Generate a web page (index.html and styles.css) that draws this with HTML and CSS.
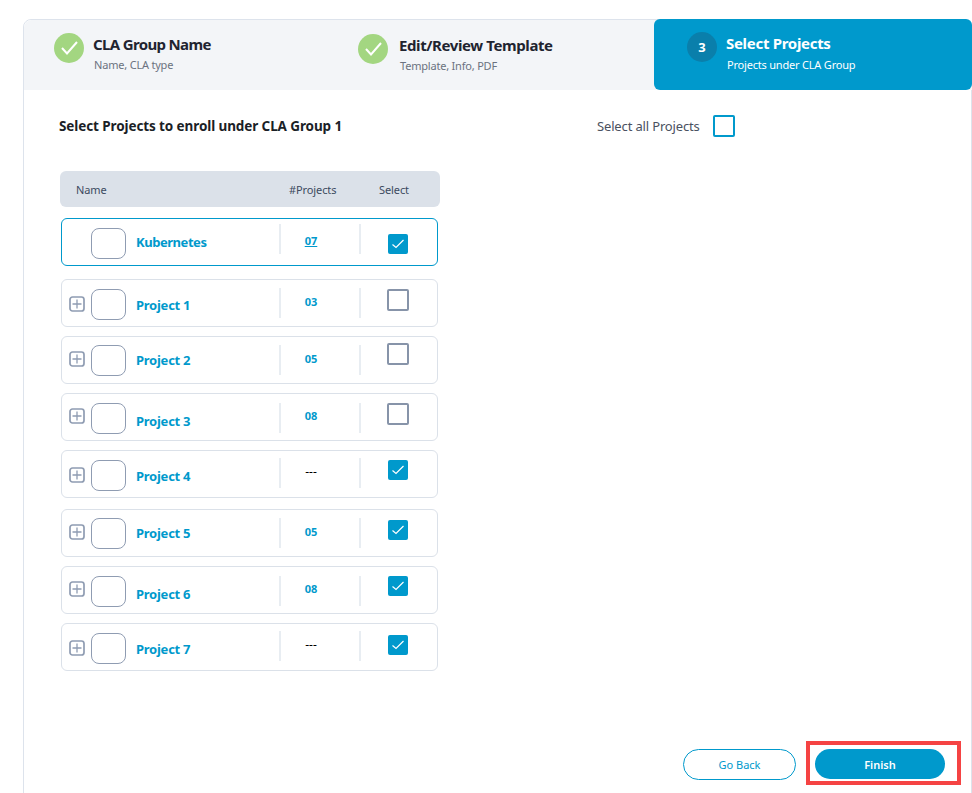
FILE: index.html
```html
<!DOCTYPE html>
<html lang="en">
<head>
    <meta charset="UTF-8">
    <meta name="viewport" content="width=device-width, initial-scale=1.0">
    <title>Select Projects</title>
    <link rel="stylesheet" href="styles.css">
</head>
<body>

    <div class="card">

        <!-- Stepper -->
        <div class="stepper">
            <div class="step step-one">
                <span class="step-icon done">
                    <svg width="30" height="30" viewBox="0 0 30 30"><path d="M8 15l5 5.5L23 9" fill="none" stroke="#fff" stroke-width="2"/></svg>
                </span>
                <div class="step-text">
                    <div class="step-title">CLA Group Name</div>
                    <div class="step-sub">Name, CLA type</div>
                </div>
            </div>
            <div class="step step-two">
                <span class="step-icon done">
                    <svg width="30" height="30" viewBox="0 0 30 30"><path d="M8 15l5 5.5L23 9" fill="none" stroke="#fff" stroke-width="2"/></svg>
                </span>
                <div class="step-text">
                    <div class="step-title">Edit/Review Template</div>
                    <div class="step-sub">Template, Info, PDF</div>
                </div>
            </div>
            <div class="step step-three">
                <span class="step-icon current">3</span>
                <div class="step-text">
                    <div class="step-title">Select Projects</div>
                    <div class="step-sub">Projects under CLA Group</div>
                </div>
            </div>
        </div>

        <div class="content">
            <div class="top-row">
                <h2>Select Projects to enroll under CLA Group 1</h2>
                <label class="select-all">Select all Projects <span class="all-box"></span></label>
            </div>

            <div class="table-head">
                <span class="head-name">Name</span>
                <span class="head-count">#Projects</span>
                <span class="head-select">Select</span>
            </div>

            <div class="row row-active">
                <span class="plus-slot"></span>
                <span class="logo"></span>
                <a class="name">Kubernetes</a>
                <span class="divider"></span>
                <span class="count linked">07</span>
                <span class="divider"></span>
                <span class="check on"><svg width="20" height="20" viewBox="0 0 20 20"><path d="M4.5 10.5l3.5 3 7.5-7.5" fill="none" stroke="#fff" stroke-width="1.2"/></svg></span>
            </div>

            <div class="row row-1">
                <span class="plus"><svg width="16" height="16" viewBox="0 0 16 16"><rect x="1" y="1" width="14" height="14" rx="2.5" fill="none" stroke="#8f9cb2" stroke-width="1.7"/><path d="M8 3.5v9M3.5 8h9" stroke="#8f9cb2" stroke-width="1.3"/></svg></span>
                <span class="logo"></span>
                <a class="name">Project 1</a>
                <span class="divider"></span>
                <span class="count">03</span>
                <span class="divider"></span>
                <span class="check"></span>
            </div>

            <div class="row row-2">
                <span class="plus"><svg width="16" height="16" viewBox="0 0 16 16"><rect x="1" y="1" width="14" height="14" rx="2.5" fill="none" stroke="#8f9cb2" stroke-width="1.7"/><path d="M8 3.5v9M3.5 8h9" stroke="#8f9cb2" stroke-width="1.3"/></svg></span>
                <span class="logo"></span>
                <a class="name">Project 2</a>
                <span class="divider"></span>
                <span class="count">05</span>
                <span class="divider"></span>
                <span class="check"></span>
            </div>

            <div class="row row-3">
                <span class="plus"><svg width="16" height="16" viewBox="0 0 16 16"><rect x="1" y="1" width="14" height="14" rx="2.5" fill="none" stroke="#8f9cb2" stroke-width="1.7"/><path d="M8 3.5v9M3.5 8h9" stroke="#8f9cb2" stroke-width="1.3"/></svg></span>
                <span class="logo"></span>
                <a class="name">Project 3</a>
                <span class="divider"></span>
                <span class="count">08</span>
                <span class="divider"></span>
                <span class="check"></span>
            </div>

            <div class="row row-4">
                <span class="plus"><svg width="16" height="16" viewBox="0 0 16 16"><rect x="1" y="1" width="14" height="14" rx="2.5" fill="none" stroke="#8f9cb2" stroke-width="1.7"/><path d="M8 3.5v9M3.5 8h9" stroke="#8f9cb2" stroke-width="1.3"/></svg></span>
                <span class="logo"></span>
                <a class="name">Project 4</a>
                <span class="divider"></span>
                <span class="count empty">---</span>
                <span class="divider"></span>
                <span class="check on"><svg width="20" height="20" viewBox="0 0 20 20"><path d="M4.5 10.5l3.5 3 7.5-7.5" fill="none" stroke="#fff" stroke-width="1.2"/></svg></span>
            </div>

            <div class="row row-5">
                <span class="plus"><svg width="16" height="16" viewBox="0 0 16 16"><rect x="1" y="1" width="14" height="14" rx="2.5" fill="none" stroke="#8f9cb2" stroke-width="1.7"/><path d="M8 3.5v9M3.5 8h9" stroke="#8f9cb2" stroke-width="1.3"/></svg></span>
                <span class="logo"></span>
                <a class="name">Project 5</a>
                <span class="divider"></span>
                <span class="count">05</span>
                <span class="divider"></span>
                <span class="check on"><svg width="20" height="20" viewBox="0 0 20 20"><path d="M4.5 10.5l3.5 3 7.5-7.5" fill="none" stroke="#fff" stroke-width="1.2"/></svg></span>
            </div>

            <div class="row row-6">
                <span class="plus"><svg width="16" height="16" viewBox="0 0 16 16"><rect x="1" y="1" width="14" height="14" rx="2.5" fill="none" stroke="#8f9cb2" stroke-width="1.7"/><path d="M8 3.5v9M3.5 8h9" stroke="#8f9cb2" stroke-width="1.3"/></svg></span>
                <span class="logo"></span>
                <a class="name">Project 6</a>
                <span class="divider"></span>
                <span class="count">08</span>
                <span class="divider"></span>
                <span class="check on"><svg width="20" height="20" viewBox="0 0 20 20"><path d="M4.5 10.5l3.5 3 7.5-7.5" fill="none" stroke="#fff" stroke-width="1.2"/></svg></span>
            </div>

            <div class="row row-7">
                <span class="plus"><svg width="16" height="16" viewBox="0 0 16 16"><rect x="1" y="1" width="14" height="14" rx="2.5" fill="none" stroke="#8f9cb2" stroke-width="1.7"/><path d="M8 3.5v9M3.5 8h9" stroke="#8f9cb2" stroke-width="1.3"/></svg></span>
                <span class="logo"></span>
                <a class="name">Project 7</a>
                <span class="divider"></span>
                <span class="count empty">---</span>
                <span class="divider"></span>
                <span class="check on"><svg width="20" height="20" viewBox="0 0 20 20"><path d="M4.5 10.5l3.5 3 7.5-7.5" fill="none" stroke="#fff" stroke-width="1.2"/></svg></span>
            </div>

            <div class="actions">
                <button class="btn btn-back">Go Back</button>
                <div class="highlight">
                    <button class="btn btn-finish">Finish</button>
                </div>
            </div>
        </div>
    </div>

</body>
</html>
```

FILE: styles.css
```css
html, body {
    height: 793px;
    overflow: hidden;
}

body {
    font-family: 'Noto Sans', 'Open Sans', sans-serif;
    background-color: #ffffff;
    color: #1f2430;
    margin: 0;
    padding: 19px 0 0 23px;
    box-sizing: border-box;
}

.card {
    width: 949px;
    height: 800px;
    box-sizing: border-box;
    border: 1px solid #dde3ec;
    border-radius: 8px 8px 0 0;
    background: #ffffff;
}

/* Stepper */
.stepper {
    display: flex;
    height: 70px;
    background-color: #f3f5f8;
    border-radius: 8px 8px 0 0;
    margin-right: -1px;
}

.step {
    display: flex;
    align-items: flex-start;
    box-sizing: border-box;
}

.step-one {
    width: 304px;
    padding: 13px 0 0 30px;
}

.step-two {
    width: 326px;
    padding: 14px 0 0 30px;
}

.step-three {
    flex: 1;
    padding: 13px 0 0 33px;
    background-color: #0099cc;
    border-radius: 6px;
    margin-top: -1px;
    height: 71px;
    color: #ffffff;
}

.step-icon {
    width: 30px;
    height: 30px;
    border-radius: 50%;
    display: flex;
    align-items: center;
    justify-content: center;
    flex-shrink: 0;
    font-size: 13px;
    font-weight: 700;
}

.step-icon.done {
    background-color: #a3d681;
}

.step-icon.current {
    background-color: #0a7fab;
    color: #ffffff;
}

.step-one .step-text {
    margin-left: 9px;
}

.step-two .step-text {
    margin-left: 11px;
}

.step-three .step-text {
    margin-left: 9px;
}

.step-title {
    font-size: 15px;
    font-weight: 700;
    line-height: 22px;
    letter-spacing: -0.3px;
}

.step-one .step-title {
    letter-spacing: -0.65px;
}

.step-two .step-title {
    letter-spacing: -0.4px;
}

.step-sub {
    font-size: 11px;
    line-height: 16px;
    margin: 2px 0 0 1px;
    color: #6b7280;
    letter-spacing: -0.2px;
}

.step-three .step-sub {
    color: #ffffff;
    margin-top: 3px;
}

/* Content */
.content {
    padding: 0 10px 0 35px;
}

.top-row {
    display: flex;
    align-items: center;
    height: 22px;
    margin: 25px 0 34px;
}

h2 {
    margin: 0;
    font-size: 13.5px;
    font-weight: 700;
    color: #1b1f27;
    letter-spacing: -0.1px;
    width: 538px;
}

.select-all {
    display: flex;
    align-items: center;
    font-size: 13px;
    color: #4a5160;
    letter-spacing: -0.15px;
}

.all-box {
    width: 22px;
    height: 22px;
    box-sizing: border-box;
    border: 2px solid #0099cc;
    border-radius: 2px;
    margin-left: 13px;
}

.table-head {
    display: flex;
    align-items: center;
    width: 380px;
    height: 36px;
    margin-left: 1px;
    background-color: #dbe1e9;
    border-radius: 6px;
    font-size: 11px;
    color: #3c4a60;
    letter-spacing: -0.1px;
}

.head-name {
    margin-left: 16px;
    width: 213px;
}

.head-count {
    width: 90px;
}

/* Rows */
.row {
    display: flex;
    align-items: flex-start;
    width: 377px;
    height: 48px;
    box-sizing: border-box;
    margin: 9px 0 0 2px;
    border: 1px solid #dbe1e9;
    border-radius: 6px;
}

.row-active {
    border-color: #0099cc;
    margin-top: 11px;
}

.row-1 {
    margin-top: 13px;
}

.row-5 {
    margin-top: 11px;
}

.plus, .plus-slot {
    width: 16px;
    height: 16px;
    margin: 14px 6px 0 7px;
    flex-shrink: 0;
}

.plus svg {
    display: block;
}

.logo {
    width: 35px;
    height: 31px;
    box-sizing: border-box;
    border: 1px solid #8f9cb2;
    border-radius: 8px;
    margin-top: 9px;
    flex-shrink: 0;
}

.name {
    width: 143px;
    margin: 13px 0 0 10px;
    font-size: 13px;
    line-height: 20px;
    font-weight: 700;
    color: #0099cc;
    letter-spacing: -0.25px;
}

.divider {
    width: 2px;
    height: 30px;
    margin-top: 8px;
    background-color: #e8edf2;
    flex-shrink: 0;
}

.count {
    width: 78px;
    box-sizing: border-box;
    padding-right: 18px;
    margin-top: 13px;
    text-align: center;
    font-size: 11px;
    line-height: 18px;
    font-weight: 700;
    color: #0099cc;
}

.count.linked {
    text-decoration: underline;
}

.count.empty {
    color: #000000;
    font-weight: 400;
    font-size: 12px;
    margin-top: 12px;
}

.check {
    width: 22px;
    height: 22px;
    box-sizing: border-box;
    border: 2px solid #8794a9;
    border-radius: 2px;
    margin: 9px 0 0 26px;
}

.check.on {
    width: 20px;
    height: 20px;
    border: none;
    background-color: #0099cc;
    margin-left: 27px;
}

.check svg {
    display: block;
}

/* the rows in the design are not quite aligned, so each gets its own offsets */
.row-active .check { margin-top: 15px; }
.row-active .divider { margin-top: 5px; }
.row-active .name { letter-spacing: -0.45px; }
.row-1 .plus { margin-top: 16px; }
.row-1 .name { margin-top: 15px; }
.row-2 .logo { margin-top: 8px; }
.row-2 .check { margin-top: 6px; }
.row-3 .divider { margin-top: 9px; }
.row-3 .name { margin-top: 17px; }
.row-4 .divider { margin-top: 7px; }
.row-4 .plus { margin-top: 16px; }
.row-4 .name { margin-top: 15px; }
.row-5 .logo { margin-top: 8px; }
.row-5 .check { margin-top: 10px; }
.row-6 .divider { margin-top: 9px; }
.row-6 .name { margin-top: 17px; }
.row-7 .divider { margin-top: 7px; }
.row-7 .plus { margin-top: 16px; }
.row-7 .name { margin-top: 15px; }
.row-7 .check { margin-top: 11px; }

/* Footer buttons */
.actions {
    display: flex;
    justify-content: flex-end;
    align-items: flex-start;
    gap: 10px;
    margin-top: 70px;
}

.btn {
    height: 30px;
    border-radius: 16px;
    font-family: inherit;
    font-size: 11px;
    cursor: pointer;
}

.btn-back {
    width: 113px;
    margin-top: 8px;
    height: 31px;
    background: #ffffff;
    border: 1px solid #0099cc;
    color: #0099cc;
}

.highlight {
    border: 4px solid #f54343;
    padding: 4px 12px 2px 5px;
}

.btn-finish {
    display: block;
    width: 130px;
    background-color: #0099cc;
    border: none;
    color: #ffffff;
    font-weight: 600;
}
```
